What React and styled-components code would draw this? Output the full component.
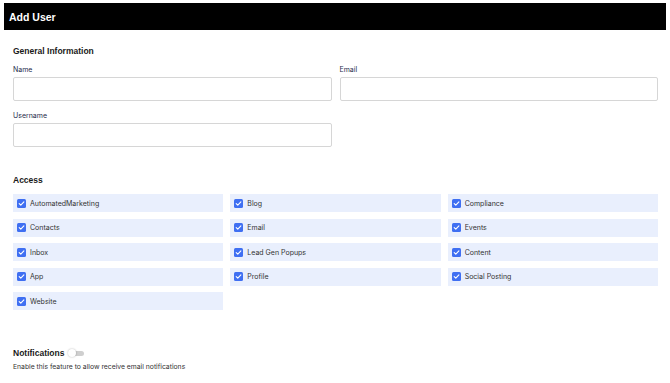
import React from "react";
import styled, { createGlobalStyle } from "styled-components";

const GlobalStyle = createGlobalStyle`
  body {
    margin: 0;
    background: #ffffff;
    font-family: Inter, "Noto Sans", sans-serif;
    color: #222;
  }
`;

const accessItems = [
  "AutomatedMarketing",
  "Blog",
  "Compliance",
  "Contacts",
  "Email",
  "Events",
  "Inbox",
  "Lead Gen Popups",
  "Content",
  "App",
  "Profile",
  "Social Posting",
  "Website",
];

function CheckIcon() {
  return (
    <svg width="9" height="9" viewBox="0 0 9 9">
      <rect x="0" y="0" width="9" height="9" rx="1.5" fill="#3f6ff2" />
      <path d="M2.2 4.7 L3.8 6.2 L6.9 2.9" fill="none" stroke="#ffffff" strokeWidth="1.1" strokeLinecap="round" strokeLinejoin="round" />
    </svg>
  );
}

function App() {
  return (
    <Page>
      <GlobalStyle />
      <Header>Add User</Header>
      <Content>
        <SectionTitle>General Information</SectionTitle>
        <FieldGrid>
          <Field>
            <Label>Name</Label>
            <Input />
          </Field>
          <Field>
            <Label>Email</Label>
            <Input />
          </Field>
          <Field>
            <Label>Username</Label>
            <Input />
          </Field>
        </FieldGrid>

        <SectionTitle spaced>Access</SectionTitle>
        <AccessGrid>
          {accessItems.map((item) => (
            <AccessRow key={item}>
              <CheckIcon />
              <AccessLabel>{item}</AccessLabel>
            </AccessRow>
          ))}
        </AccessGrid>

        <NotifyRow>
          <SectionTitle inline>Notifications</SectionTitle>
          <Toggle>
            <Knob />
          </Toggle>
        </NotifyRow>
        <Hint>Enable this feature to allow receive email notifications</Hint>
      </Content>
    </Page>
  );
}

const Page = styled.div`
  padding: 3px 4px 0 4px;
`;

const Header = styled.div`
  height: 27px;
  background: #000;
  color: #fff;
  font-family: "Liberation Sans", Arial, sans-serif;
  font-weight: bold;
  font-size: 10.5px;
  display: flex;
  align-items: center;
  padding-left: 5px;
`;

const Content = styled.div`
  padding: 16px 8px 0 9px;
`;

const SectionTitle = styled.div`
  font-family: "Liberation Sans", Arial, sans-serif;
  font-weight: bold;
  font-size: 8.5px;
  color: #1a1a1a;
  margin-top: ${(p) => (p.spaced ? "28px" : "0")};
  margin-bottom: ${(p) => (p.inline ? "0" : "9px")};
`;

const FieldGrid = styled.div`
  display: grid;
  grid-template-columns: 1fr 1fr;
  column-gap: 8px;
  row-gap: 10px;
`;

const Field = styled.div`
  display: flex;
  flex-direction: column;
`;

const Label = styled.div`
  font-size: 7px;
  color: #1e2a4a;
  margin-bottom: 3px;
`;

const Input = styled.div`
  height: 22px;
  border: 1px solid #d6d6d6;
  border-radius: 2px;
  background: #fff;
`;

const AccessGrid = styled.div`
  display: grid;
  grid-template-columns: repeat(3, 1fr);
  column-gap: 7px;
  row-gap: 6.5px;
`;

const AccessRow = styled.div`
  height: 18px;
  background: #e9effd;
  display: flex;
  align-items: center;
  padding-left: 4px;
  gap: 4px;
`;

const AccessLabel = styled.span`
  font-size: 7px;
  color: #333;
`;

const NotifyRow = styled.div`
  display: flex;
  align-items: center;
  gap: 5px;
  margin-top: 38px;
`;

const Toggle = styled.div`
  position: relative;
  width: 15px;
  height: 5px;
  border-radius: 3px;
  background: #cfcfcf;
`;

const Knob = styled.div`
  position: absolute;
  left: -1px;
  top: -2px;
  width: 8px;
  height: 8px;
  border-radius: 50%;
  background: #fff;
  box-shadow: 0 0 2px rgba(0, 0, 0, 0.3);
`;

const Hint = styled.div`
  font-size: 6.8px;
  color: #333;
  margin-top: 4px;
`;

export default App;
